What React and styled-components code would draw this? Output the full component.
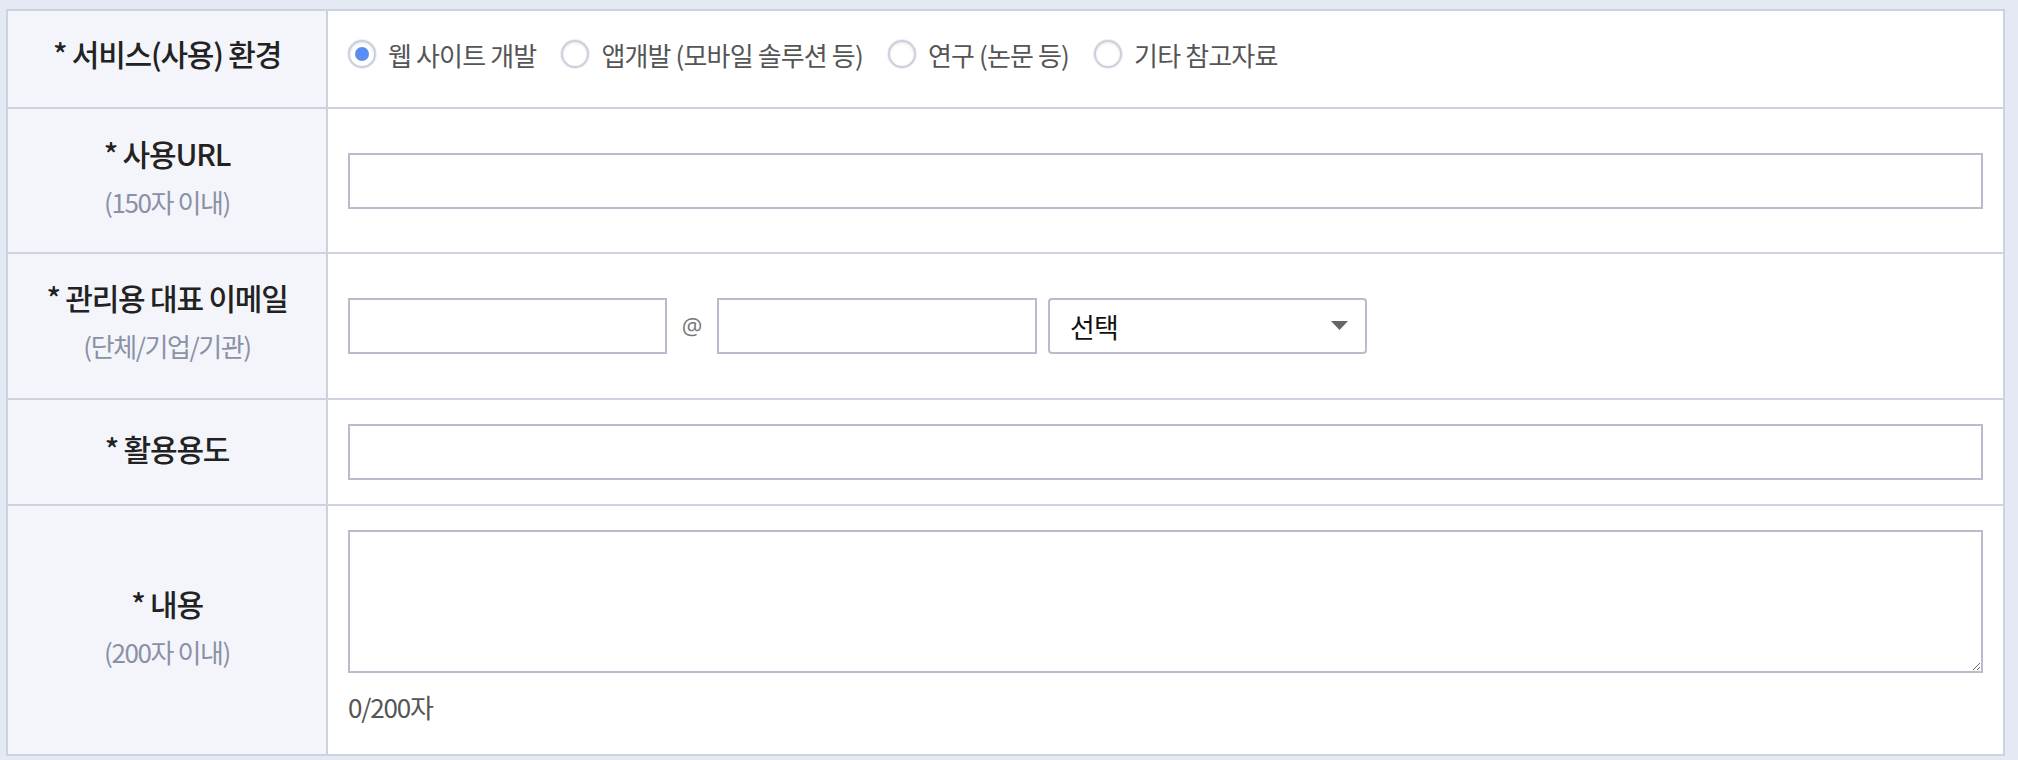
import React from "react";
import styled, { createGlobalStyle } from "styled-components";

const GlobalStyle = createGlobalStyle`
  html, body {
    margin: 0;
    padding: 0;
    background: #e5e9f4;
  }
  body {
    font-family: "Noto Sans CJK KR", "Noto Sans", sans-serif;
  }
  * { box-sizing: border-box; }
`;

const Page = styled.div`
  padding: 9px 0 0 6px;
  min-height: 760px;
  background: #e5e9f4;
`;

const Table = styled.div`
  width: 1999px;
  display: grid;
  grid-template-columns: 320px 1fr;
  background: #ffffff;
  border-top: 2px solid #cdd2df;
  border-left: 2px solid #cdd2df;
  border-right: 2px solid #cdd2df;
`;

const HeadCell = styled.div`
  background: #f3f5fa;
  border-right: 2px solid #cdd2df;
  border-bottom: 2px solid #cdd2df;
  padding: ${(p) => p.$pad || "20px 16px 28px"};
  display: flex;
  flex-direction: column;
  align-items: center;
  justify-content: center;
  text-align: center;
`;

const DataCell = styled.div`
  border-bottom: 2px solid #cdd2df;
  padding: ${(p) => p.$pad || "24px 20px"};
  display: flex;
  flex-direction: column;
  justify-content: center;
`;

const LabelText = styled.div`
  font-size: 30px;
  font-weight: 500;
  color: #222;
  line-height: 48px;
  letter-spacing: -1.2px;
`;

const SubText = styled.div`
  font-size: 26px;
  color: #8a91a5;
  line-height: 44px;
  margin-top: 3px;
  letter-spacing: -1.4px;
`;

const RadioGroup = styled.div`
  display: flex;
  align-items: center;
  height: 48px;
`;

const RadioLabel = styled.label`
  display: flex;
  align-items: center;
  gap: 12px;
  margin-right: 25px;
  font-size: 26px;
  color: #555;
  letter-spacing: -0.85px;
  cursor: pointer;
`;

const RadioCircle = styled.span`
  position: relative;
  width: 28px;
  height: 28px;
  border-radius: 50%;
  background: #fff;
  border: 2px solid #ccd0dc;
  box-shadow: inset 0 1px 3px rgba(0, 0, 0, 0.1), 0 0 0 1px #eef0f5;
  flex-shrink: 0;
  &::after {
    content: "";
    position: absolute;
    left: 5px;
    top: 5px;
    width: 14px;
    height: 14px;
    border-radius: 50%;
    background: #5a8df3;
    display: ${(p) => (p.$checked ? "block" : "none")};
  }
`;

const TextInput = styled.input`
  height: 56px;
  width: ${(p) => p.$width || "100%"};
  border: 2px solid #b8bccc;
  background: #fff;
  font-size: 24px;
  font-family: inherit;
  padding: 0 16px;
  outline: none;
  border-radius: 0;
`;

const EmailRow = styled.div`
  display: flex;
  align-items: center;
  gap: 13px;
`;

const At = styled.span`
  width: 24px;
  text-align: center;
  font-size: 23px;
  color: #777;
  font-family: "Open Sans", sans-serif;
`;

const SelectWrap = styled.div`
  position: relative;
  width: 319px;
  height: 56px;
  margin-left: -2px;
`;

const Select = styled.select`
  appearance: none;
  -webkit-appearance: none;
  width: 100%;
  height: 100%;
  border: 2px solid #b8bccc;
  border-radius: 4px;
  background: #fff;
  padding: 0 20px;
  font-size: 27px;
  font-family: "Noto Sans CJK KR", sans-serif;
  color: #111;
  outline: none;
  letter-spacing: -0.8px;
`;

const Arrow = styled.svg`
  position: absolute;
  right: 19px;
  top: 23px;
  pointer-events: none;
`;

const TextArea = styled.textarea`
  width: 100%;
  height: 143px;
  border: 2px solid #b8bccc;
  font-size: 24px;
  font-family: inherit;
  padding: 12px 16px;
  outline: none;
  resize: both;
  display: block;
`;

const Counter = styled.div`
  margin-top: 16px;
  margin-bottom: 5px;
  font-size: 26px;
  line-height: 36px;
  color: #555;
  letter-spacing: -1.2px;
`;

const options = [
  { label: "웹 사이트 개발", checked: true },
  { label: "앱개발 (모바일 솔루션 등)" },
  { label: "연구 (논문 등)" },
  { label: "기타 참고자료" },
];

export default function App() {
  return (
    <>
      <GlobalStyle />
      <Page>
        <Table>
          <HeadCell $pad="18px 16px 30px">
            <LabelText>* 서비스(사용) 환경</LabelText>
          </HeadCell>
          <DataCell $pad="19px 20px 29px">
            <RadioGroup>
              {options.map((o) => (
                <RadioLabel key={o.label}>
                  <RadioCircle $checked={o.checked} />
                  {o.label}
                </RadioLabel>
              ))}
            </RadioGroup>
          </DataCell>

          <HeadCell>
            <LabelText>* 사용URL</LabelText>
            <SubText>(150자 이내)</SubText>
          </HeadCell>
          <DataCell>
            <TextInput type="text" />
          </DataCell>

          <HeadCell $pad="19px 16px 30px">
            <LabelText>* 관리용 대표 이메일</LabelText>
            <SubText>(단체/기업/기관)</SubText>
          </HeadCell>
          <DataCell>
            <EmailRow>
              <TextInput type="text" $width="319px" />
              <At>@</At>
              <TextInput type="text" $width="320px" />
              <SelectWrap>
                <Select defaultValue="">
                  <option value="">선택</option>
                </Select>
                <Arrow width="17" height="9" viewBox="0 0 17 9">
                  <path d="M0 0 L17 0 L8.5 9 Z" fill="#666" />
                </Arrow>
              </SelectWrap>
            </EmailRow>
          </DataCell>

          <HeadCell>
            <LabelText>* 활용용도</LabelText>
          </HeadCell>
          <DataCell>
            <TextInput type="text" />
          </DataCell>

          <HeadCell>
            <LabelText>* 내용</LabelText>
            <SubText>(200자 이내)</SubText>
          </HeadCell>
          <DataCell>
            <TextArea />
            <Counter>0/200자</Counter>
          </DataCell>
        </Table>
      </Page>
    </>
  );
}
